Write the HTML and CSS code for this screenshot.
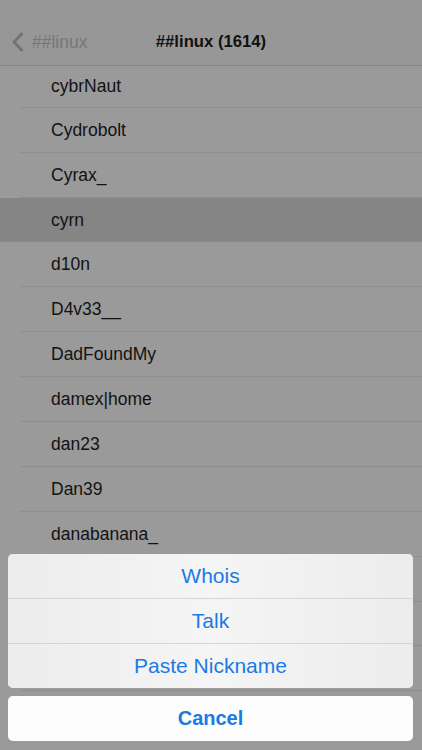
FILE: index.html
```html
<!DOCTYPE html>
<html>
<head>
<meta charset="utf-8">
<link rel="stylesheet" href="styles.css">
</head>
<body>
<div class="screen">
  <div class="statusbar"></div>
  <div class="navbar">
    <div class="back">
      <svg class="chev" width="14" height="22" viewBox="0 0 14 22"><path d="M11.5 2 L3 11 L11.5 20" fill="none" stroke="#727272" stroke-width="2.6" stroke-linecap="butt" stroke-linejoin="miter"/></svg>
      <span class="back-label">##linux</span>
    </div>
    <div class="title">##linux (1614)</div>
  </div>
  <ul class="list">
    <li class="row first">cybrNaut</li>
    <li class="row">Cydrobolt</li>
    <li class="row">Cyrax_</li>
    <li class="row selected">cyrn</li>
    <li class="row">d10n</li>
    <li class="row">D4v33__</li>
    <li class="row">DadFoundMy</li>
    <li class="row">damex|home</li>
    <li class="row">dan23</li>
    <li class="row">Dan39</li>
    <li class="row">danabanana_</li>
    <li class="row">danbo</li>
    <li class="row">dancer</li>
    <li class="row">dandroid</li>
  </ul>
  <div class="sheet">
    <div class="group">
      <div class="action">Whois</div>
      <div class="action">Talk</div>
      <div class="action">Paste Nickname</div>
    </div>
    <div class="cancel">Cancel</div>
  </div>
</div>
</body>
</html>
```
FILE: styles.css
```css
html, body {
  margin: 0;
  padding: 0;
}
body {
  width: 422px;
  height: 750px;
  overflow: hidden;
  background: #9a9a9a;
  font-family: "Liberation Sans", Arial, sans-serif;
}
.screen {
  position: relative;
  width: 422px;
  height: 750px;
  overflow: hidden;
  display: flex;
  flex-direction: column;
  background: #9a9a9a;
}
.statusbar {
  height: 20px;
  background: #979797;
  flex: none;
}
.navbar {
  flex: none;
  position: relative;
  display: flex;
  align-items: center;
  justify-content: center;
  background: #979797;
  border-bottom: 1px solid #878787;
  box-sizing: border-box;
  height: 45.5px;
}
.back {
  position: absolute;
  left: 11px;
  top: 0;
  bottom: 0;
  display: flex;
  align-items: center;
  gap: 7px;
}
.chev {
  display: block;
  margin-top: -1px;
}
.back-label {
  font-size: 17.5px;
  color: #767676;
}
.title {
  font-size: 16.7px;
  font-weight: bold;
  color: #111;
}
.list {
  list-style: none;
  margin: 0;
  padding: 0;
  flex: 1;
}
.row {
  height: 44.9px;
  box-sizing: border-box;
  display: flex;
  align-items: center;
  padding-left: 51px;
  font-size: 17.5px;
  color: #121212;
  position: relative;
}
.row::after {
  content: "";
  position: absolute;
  left: 20px;
  right: 0;
  bottom: 0;
  height: 1px;
  background: #8e8e8e;
}
.row.first {
  height: 42.3px;
}
.row.selected {
  background: #858585;
}
.row.selected::after {
  left: 0;
  background: #8a8a8a;
}
.sheet {
  position: absolute;
  left: 8px;
  right: 9px;
  bottom: 9px;
  display: flex;
  flex-direction: column;
  gap: 8px;
}
.group {
  border-radius: 5px;
  overflow: hidden;
  background: #efefef;
}
.action {
  height: 45px;
  display: flex;
  align-items: center;
  justify-content: center;
  font-size: 21px;
  color: #1b7ae3;
  background: linear-gradient(to right, #ececec, #f5f5f5 50%, #ececec);
  border-bottom: 1px solid #d6d6d6;
  box-sizing: border-box;
}
.action:last-child {
  border-bottom: none;
  height: 44px;
}
.cancel {
  height: 45px;
  border-radius: 5px;
  background: #fdfdfd;
  display: flex;
  align-items: center;
  justify-content: center;
  font-size: 20px;
  font-weight: bold;
  color: #1b7ae3;
}
```
